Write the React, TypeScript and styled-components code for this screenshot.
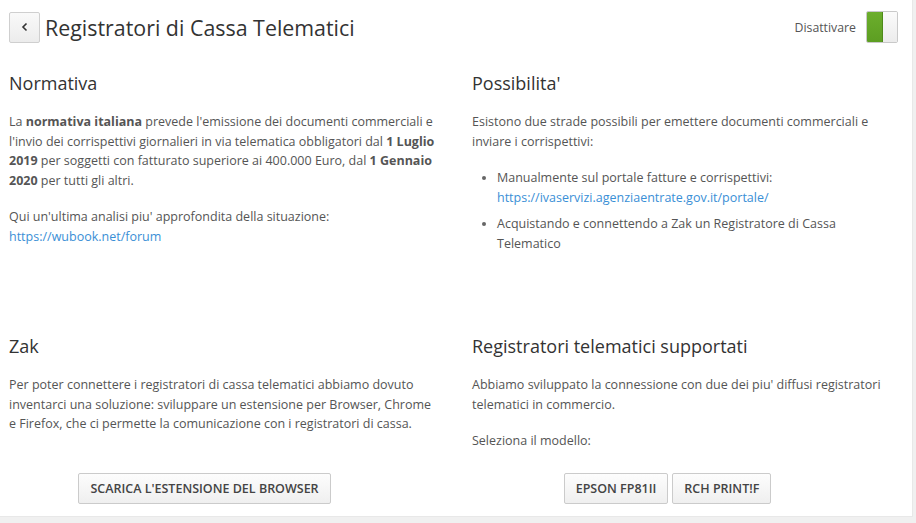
import React from "react";
import styled, { createGlobalStyle } from "styled-components";

const Global = createGlobalStyle`
  html, body { margin: 0; padding: 0; }
  body {
    background: #f0f0f0;
    font-family: "Open Sans", "Liberation Sans", sans-serif;
    color: #555;
    font-size: 12.5px;
  }
  * { box-sizing: border-box; }
`;

const Card = styled.div`
  width: 913px;
  height: 517px;
  background: #fff;
  border-right: 1px solid #e8e8e8;
  border-bottom: 1px solid #e8e8e8;
  display: flex;
  flex-direction: column;
`;

const Header = styled.div`
  display: flex;
  align-items: center;
  height: 54px;
  padding: 0 14px 0 9px;
`;

const BackButton = styled.button`
  width: 31px;
  height: 31px;
  border: 1px solid #cfcfcf;
  border-radius: 2px;
  background: linear-gradient(#f9f9f9, #ececec);
  display: flex;
  align-items: center;
  justify-content: center;
  padding: 0;
  cursor: pointer;
`;

const Title = styled.h1`
  margin: 0 0 0 5px;
  font-size: 21.4px;
  font-weight: 400;
  color: #333;
  flex: 1;
`;

const ToggleLabel = styled.span`
  font-size: 12.3px;
  color: #555;
  margin-right: 10px;
`;

const Toggle = styled.div`
  width: 32px;
  height: 32px;
  border: 1px solid #c9c9c9;
  border-radius: 2px;
  display: flex;
  overflow: hidden;
`;

const ToggleHalf = styled.div<{ $on?: boolean }>`
  flex: 1;
  background: ${(p) =>
    p.$on ? "linear-gradient(#6cae2c, #5d9e22)" : "linear-gradient(#fbfbfb, #ececec)"};
  border-right: ${(p) => (p.$on ? "1px solid #4e8a1a" : "none")};
`;

const Grid = styled.div`
  display: grid;
  grid-template-columns: 428px 428px;
  grid-template-rows: 263px auto;
  column-gap: 35px;
  padding: 0 9px;
`;

const Section = styled.section`
  display: flex;
  flex-direction: column;
`;

const Heading = styled.h2`
  margin: 16px 0 16px;
  font-size: 18px;
  font-weight: 400;
  color: #333;
  line-height: 26px;
`;

const Para = styled.p`
  margin: 0 0 17px;
  line-height: 19.6px;
`;

const Link = styled.a`
  color: #3a8fd6;
  text-decoration: none;
`;

const List = styled.ul`
  margin: 0;
  padding-left: 25px;
  li {
    line-height: 19.6px;
    margin-bottom: 7px;
  }
  li::marker { color: #666; }
`;

const ButtonRow = styled.div<{ $top: number }>`
  display: flex;
  justify-content: center;
  gap: 4px;
  padding-right: 37px;
  margin-top: ${(p) => p.$top}px;
`;

const Btn = styled.button`
  height: 31px;
  padding: 0 11px;
  border: 1px solid #cbcbcb;
  border-radius: 2px;
  background: linear-gradient(#fdfdfd, #efefef);
  font-family: "Open Sans", "Liberation Sans", sans-serif;
  font-size: 12.5px;
  font-weight: 600;
  color: #444;
  text-transform: uppercase;
  cursor: pointer;
`;

export default function App() {
  return (
    <>
      <Global />
      <Card>
        <Header>
          <BackButton aria-label="back">
            <svg width="10" height="10" viewBox="0 0 10 10">
              <path d="M6.5 1.5 L3 5 L6.5 8.5" fill="none" stroke="#333" strokeWidth="1.6" />
            </svg>
          </BackButton>
          <Title>Registratori di Cassa Telematici</Title>
          <ToggleLabel>Disattivare</ToggleLabel>
          <Toggle>
            <ToggleHalf $on />
            <ToggleHalf />
          </Toggle>
        </Header>
        <Grid>
          <Section>
            <Heading>Normativa</Heading>
            <Para>
              La <b>normativa italiana</b> prevede l'emissione dei documenti commerciali e
              l'invio dei corrispettivi giornalieri in via telematica obbligatori dal{" "}
              <b>1 Luglio 2019</b> per soggetti con fatturato superiore ai 400.000 Euro, dal{" "}
              <b>1 Gennaio 2020</b> per tutti gli altri.
            </Para>
            <Para>
              Qui un'ultima analisi piu' approfondita della situazione:
              <br />
              <Link href="#">https://wubook.net/forum</Link>
            </Para>
          </Section>
          <Section>
            <Heading>Possibilita'</Heading>
            <Para>
              Esistono due strade possibili per emettere documenti commerciali e inviare i
              corrispettivi:
            </Para>
            <List>
              <li>
                Manualmente sul portale fatture e corrispettivi:
                <br />
                <Link href="#">https://ivaservizi.agenziaentrate.gov.it/portale/</Link>
              </li>
              <li>Acquistando e connettendo a Zak un Registratore di Cassa Telematico</li>
            </List>
          </Section>
          <Section>
            <Heading>Zak</Heading>
            <Para>
              Per poter connettere i registratori di cassa telematici abbiamo dovuto inventarci
              una soluzione: sviluppare un estensione per Browser, Chrome e Firefox, che ci
              permette la comunicazione con i registratori di cassa.
            </Para>
            <ButtonRow $top={22}>
              <Btn>Scarica l'estensione del browser</Btn>
            </ButtonRow>
          </Section>
          <Section>
            <Heading>Registratori telematici supportati</Heading>
            <Para>
              Abbiamo sviluppato la connessione con due dei piu' diffusi registratori
              telematici in commercio.
            </Para>
            <Para>Seleziona il modello:</Para>
            <ButtonRow $top={5}>
              <Btn>Epson FP81II</Btn>
              <Btn>RCH Print!F</Btn>
            </ButtonRow>
          </Section>
        </Grid>
      </Card>
    </>
  );
}
